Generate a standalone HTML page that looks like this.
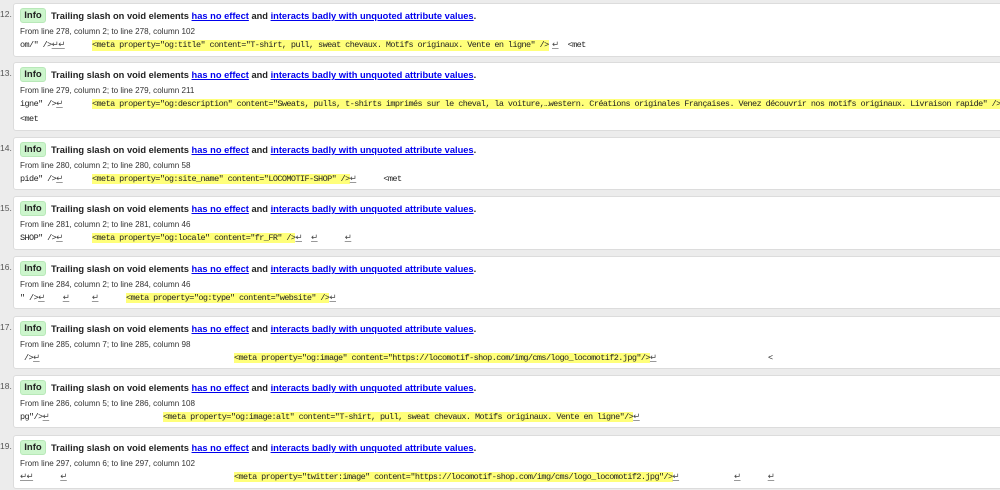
<!DOCTYPE html>
<html><head><meta charset="utf-8"><style>
html,body{margin:0;padding:0}
body{width:1000px;height:490px;overflow:hidden;background:#ececec;position:relative;font-family:"Liberation Sans",Arial,sans-serif;color:#222}
.n{position:absolute;left:0;width:12px;font-size:8.5px;color:#555}
.box{position:absolute;left:13px;width:1000px;background:#fff;border:1px solid #dcdcdc;border-radius:3px;box-sizing:border-box}
.badge{position:absolute;left:6px;top:4px;width:26px;height:15px;background:#ccf5cc;border:1px solid #b8e8b8;border-radius:3px;box-sizing:border-box;font-weight:bold;font-size:9.5px;line-height:13px;text-align:center;color:#222}
.t{position:absolute;left:37px;top:5px;font-size:9.3px;font-weight:bold;line-height:14px;white-space:nowrap}
.t a{color:#0000ee;text-decoration:underline}
.f{position:absolute;left:6px;top:22px;font-size:8.1px;line-height:12px;color:#333;white-space:nowrap}
.c{position:absolute;top:36px;font-family:"Liberation Mono",monospace;font-size:8.5px;letter-spacing:-0.58px;line-height:11px;white-space:pre;color:#222}
.h{background:#ffff7a}
.r{text-decoration:underline;text-decoration-color:#999;color:#444}
</style></head><body>

<div class="n" style="top:9px">12.</div>
<div class="box" style="top:3px;height:54px">
<div class="badge">Info</div>
<div class="t">Trailing slash on void elements <a>has no effect</a> and <a>interacts badly with unquoted attribute values</a>.</div>
<div class="f">From line 278, column 2; to line 278, column 102</div>
<div class="c" style="left:6px">om/" /><span class="r">↵↵</span></div>
<div class="c h" style="left:78px">&lt;meta property="og:title" content="T-shirt, pull, sweat chevaux. Motifs originaux. Vente en ligne" /&gt;</div>
<div class="c" style="left:538px"><span class="r">↵</span>  &lt;met</div>
</div>

<div class="n" style="top:68px">13.</div>
<div class="box" style="top:62px;height:69px">
<div class="badge">Info</div>
<div class="t">Trailing slash on void elements <a>has no effect</a> and <a>interacts badly with unquoted attribute values</a>.</div>
<div class="f">From line 279, column 2; to line 279, column 211</div>
<div class="c" style="left:6px">igne" /><span class="r">↵</span></div>
<div class="c" style="left:78px"><span class="h">&lt;meta property="og:description" content="Sweats, pulls, t-shirts imprimés sur le cheval, la voiture,…western. Créations originales Françaises. Venez découvrir nos motifs originaux. Livraison rapide" /&gt;</span><span class="r">↵</span></div>
<div class="c" style="left:6px;top:51px">&lt;met</div>
</div>

<div class="n" style="top:143px">14.</div>
<div class="box" style="top:137px;height:53px">
<div class="badge">Info</div>
<div class="t">Trailing slash on void elements <a>has no effect</a> and <a>interacts badly with unquoted attribute values</a>.</div>
<div class="f">From line 280, column 2; to line 280, column 58</div>
<div class="c" style="left:6px">pide" /><span class="r">↵</span></div>
<div class="c" style="left:78px"><span class="h">&lt;meta property="og:site_name" content="LOCOMOTIF-SHOP" /&gt;</span><span class="r">↵</span>      &lt;met</div>
</div>

<div class="n" style="top:203px">15.</div>
<div class="box" style="top:196px;height:54px">
<div class="badge">Info</div>
<div class="t">Trailing slash on void elements <a>has no effect</a> and <a>interacts badly with unquoted attribute values</a>.</div>
<div class="f">From line 281, column 2; to line 281, column 46</div>
<div class="c" style="left:6px">SHOP" /><span class="r">↵</span></div>
<div class="c" style="left:78px"><span class="h">&lt;meta property="og:locale" content="fr_FR" /&gt;</span><span class="r">↵</span>  <span class="r">↵</span>      <span class="r">↵</span></div>
</div>

<div class="n" style="top:262px">16.</div>
<div class="box" style="top:256px;height:53px">
<div class="badge">Info</div>
<div class="t">Trailing slash on void elements <a>has no effect</a> and <a>interacts badly with unquoted attribute values</a>.</div>
<div class="f">From line 284, column 2; to line 284, column 46</div>
<div class="c" style="left:6px">" /><span class="r">↵</span>    <span class="r">↵</span>     <span class="r">↵</span></div>
<div class="c" style="left:112px"><span class="h">&lt;meta property="og:type" content="website" /&gt;</span><span class="r">↵</span></div>
</div>

<div class="n" style="top:322px">17.</div>
<div class="box" style="top:316px;height:53px">
<div class="badge">Info</div>
<div class="t">Trailing slash on void elements <a>has no effect</a> and <a>interacts badly with unquoted attribute values</a>.</div>
<div class="f">From line 285, column 7; to line 285, column 98</div>
<div class="c" style="left:10px">/&gt;<span class="r">↵</span></div>
<div class="c" style="left:220px"><span class="h">&lt;meta property="og:image" content="https://locomotif-shop.com/img/cms/logo_locomotif2.jpg"/&gt;</span><span class="r">↵</span></div>
<div class="c" style="left:754px">&lt;</div>
</div>

<div class="n" style="top:381px">18.</div>
<div class="box" style="top:375px;height:53px">
<div class="badge">Info</div>
<div class="t">Trailing slash on void elements <a>has no effect</a> and <a>interacts badly with unquoted attribute values</a>.</div>
<div class="f">From line 286, column 5; to line 286, column 108</div>
<div class="c" style="left:6px">pg"/&gt;<span class="r">↵</span></div>
<div class="c" style="left:149px"><span class="h">&lt;meta property="og:image:alt" content="T-shirt, pull, sweat chevaux. Motifs originaux. Vente en ligne"/&gt;</span><span class="r">↵</span></div>
</div>

<div class="n" style="top:441px">19.</div>
<div class="box" style="top:435px;height:54px">
<div class="badge">Info</div>
<div class="t">Trailing slash on void elements <a>has no effect</a> and <a>interacts badly with unquoted attribute values</a>.</div>
<div class="f">From line 297, column 6; to line 297, column 102</div>
<div class="c" style="left:6px"><span class="r">↵↵</span>      <span class="r">↵</span></div>
<div class="c" style="left:220px"><span class="h">&lt;meta property="twitter:image" content="https://locomotif-shop.com/img/cms/logo_locomotif2.jpg"/&gt;</span><span class="r">↵</span></div>
<div class="c" style="left:720px"><span class="r">↵</span>      <span class="r">↵</span></div>
</div>

</body></html>
